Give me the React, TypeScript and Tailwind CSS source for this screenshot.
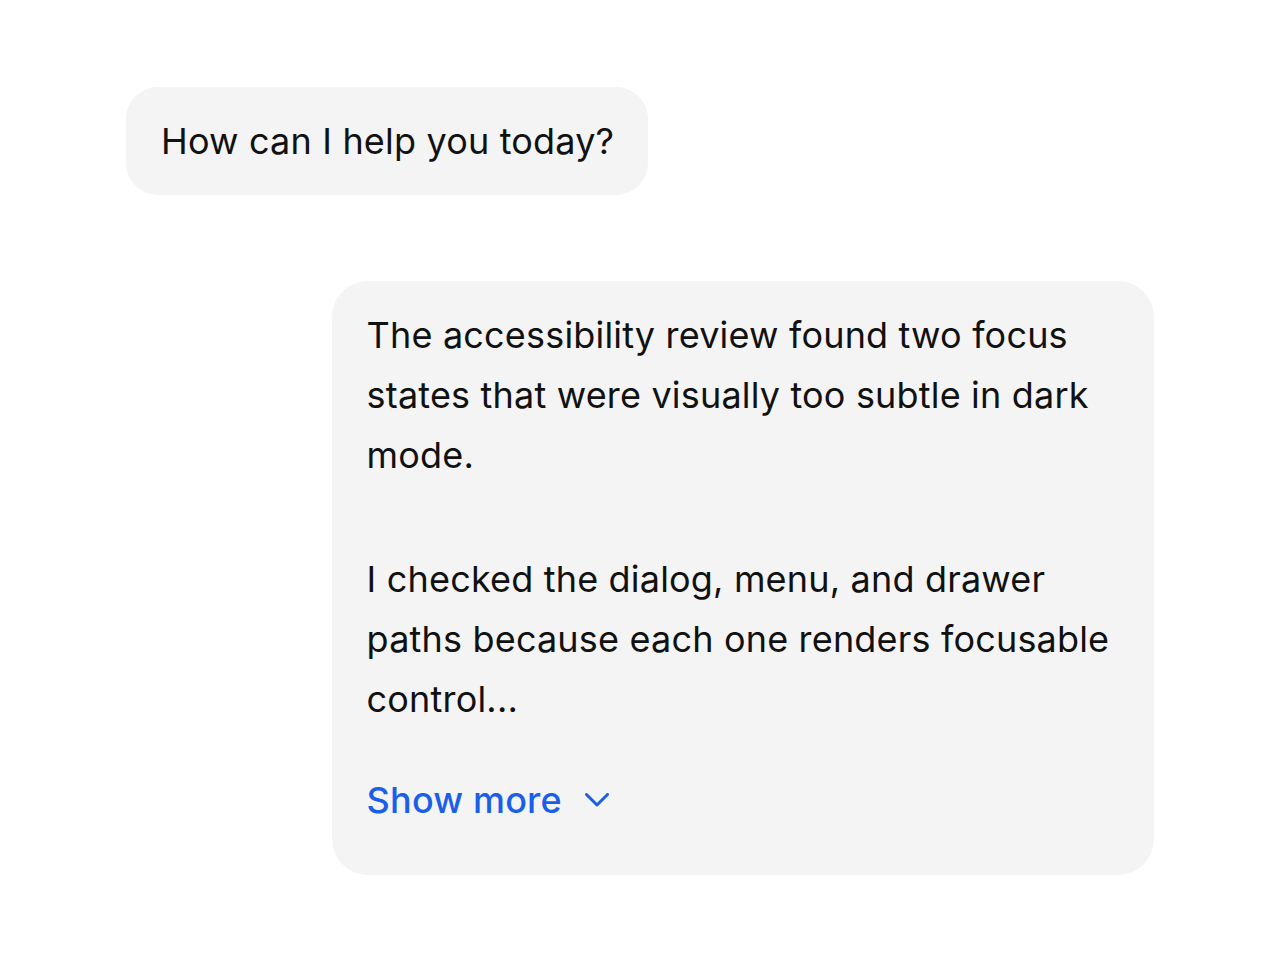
import React, { useState } from 'react';

const messages = {
  assistant: 'How can I help you today?',
  user: [
    'The accessibility review found two focus states that were visually too subtle in dark mode.',
    'I checked the dialog, menu, and drawer paths because each one renders focusable control...',
  ],
};

const ChevronDown: React.FC<{ open: boolean }> = ({ open }) => (
  <svg
    width="24"
    height="14"
    viewBox="0 0 24 14"
    fill="none"
    stroke="currentColor"
    strokeWidth="3"
    strokeLinecap="round"
    strokeLinejoin="round"
    className={open ? 'rotate-180' : ''}
  >
    <path d="M1.5 1.5 L12 12 L22.5 1.5" />
  </svg>
);

export default function App() {
  const [expanded, setExpanded] = useState(false);

  return (
    <div
      className="min-h-screen bg-white px-[126px] pt-[87px] text-[#111111] tracking-[0.18px]"
      style={{ fontFamily: 'Inter, "Noto Sans", sans-serif' }}
    >
      <div className="flex flex-col gap-[86px]">
        {/* Incoming bubble */}
        <div className="flex">
          <div className="rounded-[32px] bg-[#f4f4f4] pl-[35px] pr-[34px] py-6 text-[36px] leading-[60px]">
            {messages.assistant}
          </div>
        </div>

        {/* Outgoing bubble */}
        <div className="flex justify-end">
          <div className="w-[80%] rounded-[36px] bg-[#f4f4f4] pl-[35px] pr-9 pt-6 pb-[45px] text-[36px] leading-[60px]">
            <div className="flex flex-col gap-[64px]">
              {messages.user.map((p, i) => (
                <p key={i}>{p}</p>
              ))}
            </div>
            <button
              onClick={() => setExpanded(!expanded)}
              className="mt-[41px] flex items-center gap-[23px] font-medium text-[#1a5fe8]"
            >
              <span>Show more</span>
              <ChevronDown open={expanded} />
            </button>
          </div>
        </div>
      </div>
    </div>
  );
}
